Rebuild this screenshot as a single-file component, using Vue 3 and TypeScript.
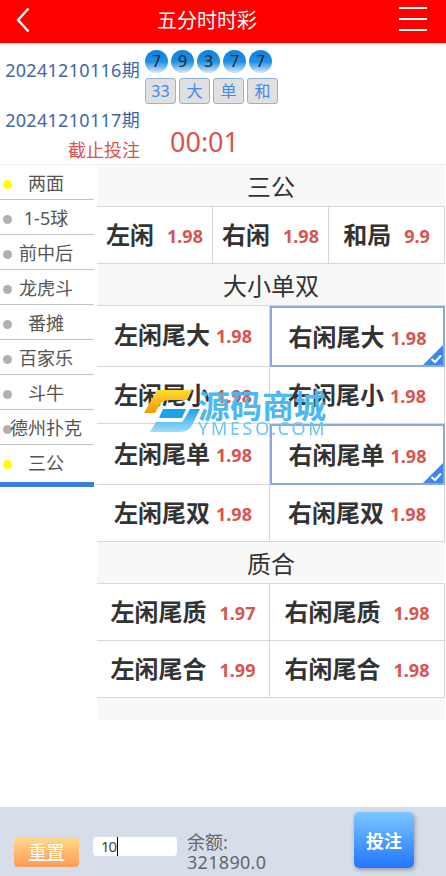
<script setup lang="ts">
interface Bet {
  name: string
  odds: string
  on?: boolean
}

const balls: string[] = ['7', '9', '3', '7', '7']
const tags: string[] = ['33', '大', '单', '和']
const menu: string[] = ['两面', '1-5球', '前中后', '龙虎斗', '番摊', '百家乐', '斗牛', '德州扑克', '三公']
const activeMenu: string[] = ['两面', '三公']

const sanGong: Bet[] = [
  { name: '左闲', odds: '1.98' },
  { name: '右闲', odds: '1.98' },
  { name: '和局', odds: '9.9' },
]
const daXiao: Bet[] = [
  { name: '左闲尾大', odds: '1.98' },
  { name: '右闲尾大', odds: '1.98', on: true },
  { name: '左闲尾小', odds: '1.98' },
  { name: '右闲尾小', odds: '1.98' },
  { name: '左闲尾单', odds: '1.98' },
  { name: '右闲尾单', odds: '1.98', on: true },
  { name: '左闲尾双', odds: '1.98' },
  { name: '右闲尾双', odds: '1.98' },
]
const zhiHe: Bet[] = [
  { name: '左闲尾质', odds: '1.97' },
  { name: '右闲尾质', odds: '1.98' },
  { name: '左闲尾合', odds: '1.99' },
  { name: '右闲尾合', odds: '1.98' },
]
</script>

<template>
  <div class="page">
    <header class="top">
      <svg class="back" width="14" height="26" viewBox="0 0 14 26">
        <path d="M12.5 1.5 L2 13 L12.5 24.5" fill="none" stroke="#fff" stroke-width="2.4" />
      </svg>
      <div class="title">五分时时彩</div>
      <div class="burger"><i></i><i></i><i></i></div>
    </header>

    <section class="info">
      <div class="info-row first">
        <div class="issue">20241210116期</div>
        <div class="result">
          <div class="balls">
            <span v-for="(b, i) in balls" :key="i" class="ball">{{ b }}</span>
          </div>
          <div class="tags">
            <span v-for="t in tags" :key="t" class="tag">{{ t }}</span>
          </div>
        </div>
      </div>
      <div class="info-row">
        <div class="left-col">
          <div class="issue">20241210117期</div>
          <div class="stop">截止投注</div>
        </div>
        <div class="clock">00:01</div>
      </div>
    </section>

    <div class="body">
      <aside class="side">
        <div v-for="m in menu" :key="m" class="side-item">
          <span class="dot" :class="{ yellow: activeMenu.includes(m) }"></span>
          <span class="side-text">{{ m }}</span>
        </div>
      </aside>

      <main class="main">
        <div class="group-title">三公</div>
        <div class="cells three">
          <div v-for="b in sanGong" :key="b.name" class="cell">
            <span class="name">{{ b.name }}</span><span class="odds wide">{{ b.odds }}</span>
          </div>
        </div>
        <div class="group-title">大小单双</div>
        <div class="cells two">
          <div v-for="b in daXiao" :key="b.name" class="cell big" :class="{ on: b.on }">
            <span class="name">{{ b.name }}</span><span class="odds">{{ b.odds }}</span>
            <svg v-if="b.on" class="tick" width="20" height="20" viewBox="0 0 20 20">
              <path d="M20 0 V20 H0 Z" fill="#3f86e8" />
              <path d="M8.5 14 L12 17 L18 10.5" fill="none" stroke="#fff" stroke-width="2" />
            </svg>
          </div>
        </div>
        <div class="group-title">质合</div>
        <div class="cells two">
          <div v-for="b in zhiHe" :key="b.name" class="cell">
            <span class="name">{{ b.name }}</span><span class="odds wide">{{ b.odds }}</span>
          </div>
        </div>
      </main>
    </div>

    <footer class="bottom">
      <button class="reset">重置</button>
      <div class="amount">10<i class="caret"></i></div>
      <div class="balance">
        <div class="bal-label">余额:</div>
        <div class="bal-value">321890.0</div>
      </div>
      <button class="submit">投注</button>
    </footer>

    <!-- 水印 -->
    <div class="mark">
      <svg class="mark-logo" width="56" height="46" viewBox="0 0 56 46">
        <defs>
          <linearGradient id="gy" x1="0" y1="0" x2="0" y2="1">
            <stop offset="0" stop-color="#ffd92e" />
            <stop offset="1" stop-color="#f59a05" />
          </linearGradient>
          <linearGradient id="gb" x1="0" y1="0" x2="0" y2="1">
            <stop offset="0" stop-color="#1aa3e6" />
            <stop offset="1" stop-color="#a0dcf7" />
          </linearGradient>
        </defs>
        <path d="M13 1 H48 L43 11 H25 C20 11 17 14 15 17 L11 24 H0 Z" fill="url(#gy)" />
        <path d="M19 20 H42 L38 29 H15 Z" fill="#1aa3e6" />
        <path d="M46 20 H56 L49 34 C47 40 42 43 36 43 H6 L12 33 H38 L41 29 Z" fill="url(#gb)" />
      </svg>
      <div class="mark-text">
        <div class="mark-cn">源码商城</div>
        <div class="mark-en">YMESO.COM</div>
      </div>
    </div>
  </div>
</template>

<style scoped>
.page {
  position: relative;
  display: flex;
  flex-direction: column;
  height: 876px;
  background: #fff;
  font-family: "Noto Sans", "Noto Sans CJK SC", sans-serif;
  overflow: hidden;
}
.top {
  display: flex;
  align-items: center;
  height: 43px;
  padding: 0 19px 0 16px;
  background: #f00;
  box-shadow: 0 1px 3px rgba(0, 0, 0, 0.15);
  flex-shrink: 0;
}
.back {
  margin-top: -4px;
}
.title {
  margin-left: 127px;
  color: #fff;
  font-size: 20px;
  line-height: 36px;
  margin-top: -2px;
}
.burger {
  margin-left: auto;
  width: 28px;
  height: 24px;
  margin-top: -5px;
  display: flex;
  flex-direction: column;
  justify-content: space-between;
}
.burger i {
  display: block;
  height: 2px;
  background: #fff;
}
.info {
  height: 122px;
  flex-shrink: 0;
  border-bottom: 1px solid #eee;
  box-sizing: border-box;
}
.info-row {
  display: flex;
}
.first {
  height: 62px;
  padding-top: 7px;
  box-sizing: border-box;
}
.first .issue {
  width: 140px;
  margin-top: 8px;
  text-align: right;
}
.issue {
  font-size: 18px;
  line-height: 24px;
  letter-spacing: 0.3px;
  color: #3f66ad;
}
.result {
  margin-left: 5px;
}
.balls {
  display: flex;
  gap: 3px;
}
.ball {
  width: 23px;
  height: 23px;
  border-radius: 50%;
  background: linear-gradient(#0a84e0 0%, #1c8fe6 50%, #dbe7f8 100%);
  color: #222;
  font-size: 16px;
  line-height: 23px;
  text-align: center;
}
.tags {
  display: flex;
  gap: 3px;
  margin-top: 5px;
}
.tag {
  box-sizing: border-box;
  width: 31px;
  height: 26px;
  border: 1px solid #8fb4e4;
  border-radius: 3px;
  background: #e0e0e0;
  color: #3f8ae6;
  font-size: 16px;
  line-height: 24px;
  text-align: center;
}
.left-col {
  width: 140px;
  margin-top: 3px;
  text-align: right;
}
.stop {
  margin-top: 6px;
  font-size: 18px;
  line-height: 24px;
  color: #d9534f;
}
.clock {
  margin: 19px 0 0 30px;
  font-size: 27px;
  line-height: 36px;
  color: #d9534f;
}
.body {
  display: flex;
  flex: 1;
  min-height: 0;
}
.side {
  width: 94px;
  margin-right: 3px;
  flex-shrink: 0;
}
.side-item {
  position: relative;
  height: 35px;
  box-sizing: border-box;
  border-bottom: 1px solid #c4c4c4;
  padding-right: 2px;
  font-size: 18px;
  line-height: 36px;
  color: #555;
  text-align: center;
  white-space: nowrap;
}
.side-item:last-child {
  height: 42px;
  border-bottom: 5px solid #3b7fde;
}
.dot {
  position: absolute;
  left: 3px;
  top: 15px;
  width: 9px;
  height: 9px;
  border-radius: 50%;
  background: #b0b0b0;
}
.dot.yellow {
  background: #ff0;
}
.side-text {
  position: relative;
}
.main {
  flex: 1;
  height: 555px;
  background: #f8f8f8;
  margin-right: 1px;
}
.group-title {
  height: 41px;
  font-size: 24px;
  line-height: 44px;
  color: #333;
  text-align: center;
  border-bottom: 1px solid #d8d8d8;
}
.cells {
  display: grid;
  background: #fff;
}
.three {
  grid-template-columns: 116px 116px 116px;
}
.two {
  grid-template-columns: 173px 175px;
}
.cell {
  position: relative;
  display: flex;
  align-items: center;
  justify-content: center;
  box-sizing: border-box;
  height: 57px;
  border-bottom: 1px solid #d8d8d8;
  border-right: 1px solid #d8d8d8;
}
.big:nth-child(n + 1):nth-child(-n + 2),
.big:nth-child(n + 5):nth-child(-n + 6) {
  height: 61px;
}
.cell.on {
  border: 2px solid #8aaadc;
}
.name {
  margin-bottom: 3px;
  font-size: 24px;
  font-weight: 700;
  color: #333;
}
.big:nth-child(1) .name {
  margin-bottom: 6px;
}
.odds {
  margin-left: 6px;
  margin-top: 2px;
  font-size: 18px;
  font-weight: 700;
  color: #d9534f;
}
.big:nth-child(1) .odds {
  margin-top: 0;
}
.odds.wide {
  margin-left: 13px;
}
.tick {
  position: absolute;
  right: 0;
  bottom: 0;
}
.bottom {
  display: flex;
  align-items: flex-start;
  height: 69px;
  margin-top: auto;
  background: #d6deea;
  flex-shrink: 0;
}
.reset {
  width: 65px;
  height: 30px;
  margin: 30px 0 0 14px;
  padding: 0 0 2px;
  border: 0;
  border-radius: 4px;
  background: linear-gradient(#ffdb8c, #ff9a55);
  color: #fff;
  font-family: inherit;
  font-size: 18px;
  text-decoration: underline;
}
.amount {
  width: 84px;
  height: 19px;
  margin: 30px 0 0 14px;
  padding-left: 8px;
  box-sizing: border-box;
  border-radius: 4px;
  background: #fff;
  color: #444;
  font-size: 15px;
  line-height: 19px;
  letter-spacing: -1px;
}
.caret {
  display: inline-block;
  width: 1px;
  height: 19px;
  margin-left: 1px;
  background: #000;
  vertical-align: top;
}
.balance {
  margin: 25px 0 0 10px;
  color: #666;
  width: 167px;
}
.bal-label {
  font-size: 18px;
  line-height: 21px;
}
.bal-value {
  font-size: 18px;
  line-height: 19px;
  letter-spacing: 0.3px;
}
.submit {
  width: 60px;
  height: 56px;
  margin-top: 5px;
  padding: 0;
  border: 0;
  border-radius: 5px;
  background: linear-gradient(#7cc6ff, #2176ff);
  box-shadow: 1px 2px 4px rgba(0, 0, 0, 0.3);
  color: #fff;
  font-family: inherit;
  font-size: 18px;
  font-weight: 700;
}
.mark {
  position: absolute;
  left: 144px;
  top: 389px;
  display: flex;
  pointer-events: none;
}
.mark-logo {
  flex-shrink: 0;
}
.mark-text {
  margin-left: -2px;
}
.mark-cn {
  font-size: 32px;
  font-weight: 700;
  line-height: 34px;
  color: #4db8ee;
  white-space: nowrap;
}
.mark-en {
  margin-top: -3px;
  font-size: 18px;
  line-height: 16px;
  letter-spacing: 2.7px;
  color: #6fc6f2;
  white-space: nowrap;
  -webkit-box-reflect: below -4px linear-gradient(transparent 60%, rgba(255, 255, 255, 0.5));
}
</style>
